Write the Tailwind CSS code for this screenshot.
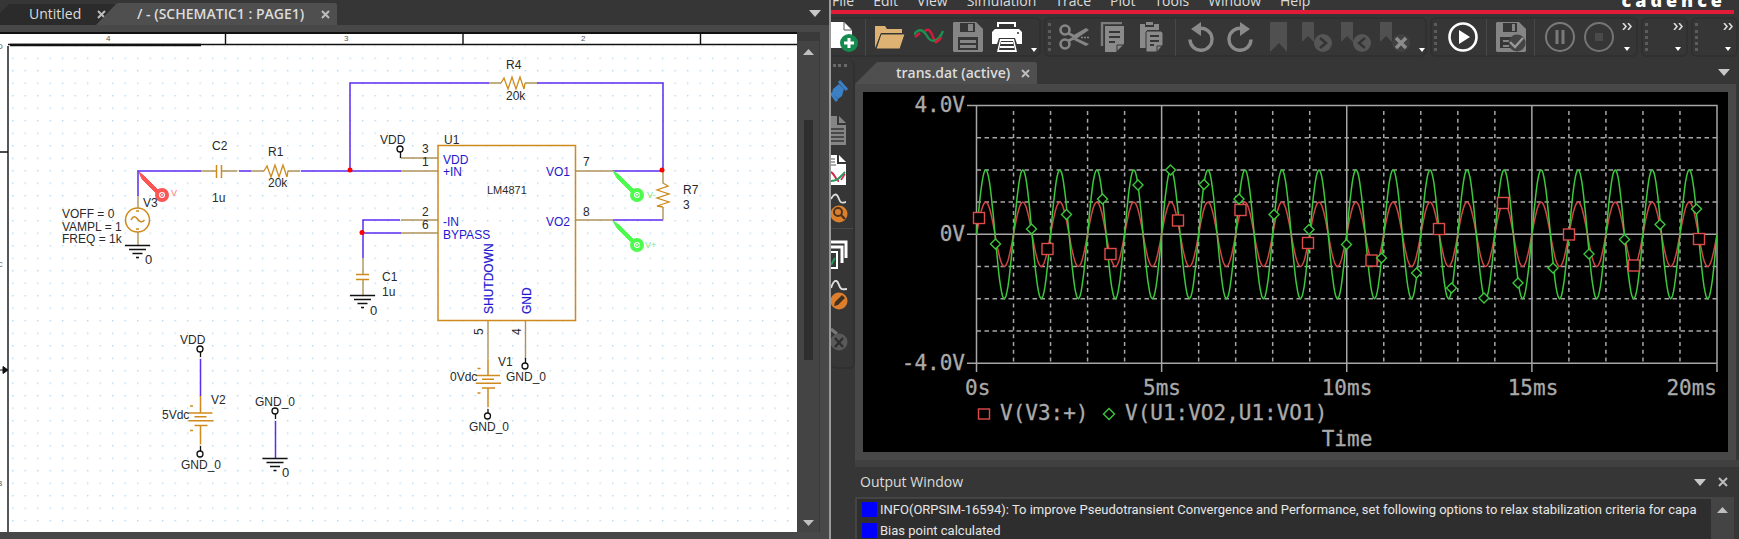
<!DOCTYPE html>
<html lang="en">
<head>
    <meta charset="UTF-8">
    <meta name="viewport" content="width=device-width, initial-scale=1.0">
    <title>Schematic and Simulation</title>
    <script src="https://cdn.jsdelivr.net/npm/@tailwindcss/browser@4"></script>
</head>
<body class="h-screen overflow-hidden bg-[#363636] font-['Open_Sans','Noto_Sans',sans-serif] text-sm text-[#dcdcdc]">

<div class="grid h-full grid-cols-[831fr_908fr]">

    <!-- Schematic editor -->
    <section class="flex min-w-0 flex-col border-r-2 border-[#9a9a9a] bg-[#484848]">

        <!-- Tabs -->
        <div class="flex h-[25px] shrink-0 items-end bg-[#363636]">
            <div class="relative flex h-[22px] w-[118px] items-center">
                <svg class="absolute inset-0" width="118" height="22"><path d="M0 10 L9 1 H118 V22 H0z" fill="#2b2b2b"/></svg>
                <button class="relative ml-[29px]">Untitled</button>
                <button class="relative ml-4" aria-label="Close Untitled"><svg width="9" height="9" stroke="#bdbdbd" stroke-width="2"><path d="M1 1l7 7M8 1l-7 7"/></svg></button>
            </div>
            <div class="relative -ml-[22px] flex h-[22px] w-[241px] items-center">
                <svg class="absolute inset-0" width="241" height="22"><path d="M0 22 L20 1 Q21 0 23 0 H239 Q241 0 241 2 V22z" fill="#4f4f4f"/></svg>
                <button class="relative ml-[41px] font-semibold whitespace-nowrap">/ - (SCHEMATIC1 : PAGE1)</button>
                <button class="relative ml-auto mr-[7px]" aria-label="Close page"><svg width="9" height="9" stroke="#bdbdbd" stroke-width="2"><path d="M1 1l7 7M8 1l-7 7"/></svg></button>
            </div>
            <button class="mr-2 mb-2 ml-auto" aria-label="Tab list"><svg width="12" height="7"><path d="M0 0h12l-6 7z" fill="#c8c8c8"/></svg></button>
        </div>

        <div class="flex min-h-0 flex-1 pt-[7px] pb-[7px]">
            <!-- Sheet -->
            <svg class="min-w-0 flex-1 bg-white font-['Liberation_Sans',Arial,sans-serif] text-[12px]" viewBox="0 32 797 500" preserveAspectRatio="xMinYMin slice" fill="none">
                <defs>
                    <pattern id="dots" width="12.5" height="12.5" patternUnits="userSpaceOnUse" x="12" y="57.5"><rect width="1.4" height="1.4" fill="#b4daf2"/></pattern>
                    <g id="gnd" stroke="#111" stroke-width="1.4"><path d="M-12.5 0h25M-8.5 4h17M-5 8h10M-1.5 12h3"/></g>
                    <path id="res" d="M0 0l3-5 4 11 4-12 4 12 4-12 4 12 1-6" stroke="#cf8a1c" stroke-width="1.3"/>
                    <g id="battery" stroke="#cf8a1c" stroke-width="1.5"><path d="M0-17V0M-12 0h24M-6 3.7h12M-12 7.7h25M-6 12.500h13M0 12.500v19M-10.500-7h3M-10.500 17.500h3"/></g>
                </defs>
                <rect x="9" y="46" width="788" height="486" fill="url(#dots)"/>

                <!-- Frame and zone marks -->
                <g stroke="#111">
                    <path d="M0 33h797" stroke-width="2"/>
                    <path d="M8 44.500h789M225.500 33v11M463 33v11M700.500 33v11M0 152h8M8 46v486" stroke-width="1.4"/>
                    <path d="M10 45h191" stroke-width="2.400"/>
                </g>
                <path d="M0 370h3v-3.500l5 3.500-5 3.500v-3.500" fill="#111" stroke="#111"/>
                <g fill="#555" class="text-[8px]">
                    <text x="106" y="41">4</text><text x="344" y="41">3</text><text x="581" y="41">2</text>
                    <text x="-3" y="49">D</text><text x="-3" y="267">C</text><text x="-3" y="486">B</text>
                </g>

                <!-- Wires -->
                <g stroke="#5b2df0" stroke-width="1.500">
                    <path d="M138 196V171h63M239 171h12M301 171h100M350 171V83h139M537 83h126v88M613 171h50M613 220h50"/>
                    <path d="M400 220h-37v38M363 233h38M200.500 359v37M275.500 421v37"/>
                </g>

                <!-- Pins and leads -->
                <g stroke="#b0935a" stroke-width="1.400">
                    <path d="M201 171h15M222 171h15M251 171h13M288 171h12M401 171h37M401 158h37M489 83h12M525 83h12M401 220h37M401 233h37"/>
                    <path d="M575 171h38M575 220h38M663 171v12M663 207v13M138 196v12M138 232v13M363 258v16M363 280v15M488 321v37M525.500 321v37"/>
                </g>

                <!-- Parts -->
                <g stroke="#cf8a1c" stroke-width="1.500">
                    <rect x="438" y="145.500" width="137.500" height="175"/>
                    <path d="M216.500 165v13M221.500 165v13M356 274.500h13M356 279.500h13"/>
                    <circle cx="137.500" cy="220" r="12"/>
                    <path d="M131 220q3-6 6.500-1t7 1M136 211h3M136 229h3"/>
                </g>
                <use href="#res" x="264" y="171"/>
                <use href="#res" x="501" y="83"/>
                <use href="#res" transform="translate(663 183) rotate(90)"/>
                <use href="#battery" x="200.500" y="413"/>
                <use href="#battery" x="488" y="375.500"/>
                <use href="#gnd" x="137.500" y="245.500"/>
                <use href="#gnd" x="362.500" y="295.500"/>
                <use href="#gnd" x="275" y="458.500"/>
                <g stroke="#111" stroke-width="1.300">
                    <circle cx="400" cy="149" r="3"/><circle cx="200" cy="349" r="3"/><circle cx="200" cy="454" r="3"/>
                    <circle cx="275" cy="411" r="3"/><circle cx="487.500" cy="416" r="3"/><circle cx="525" cy="366" r="3"/>
                    <path d="M400.500 152v6M200.500 352v5M200.500 446v5M275.500 414v5M488 409v4M525.500 358v5"/>
                </g>
                <g fill="#f00"><circle cx="350" cy="170" r="2.500"/><circle cx="662" cy="170" r="2.500"/><circle cx="362" cy="232.500" r="2.500"/></g>

                <!-- Probes -->
                <g stroke="#fb5555"><path d="M139 172l5 4 15 15-3 2-14-14z" fill="#fb5555"/><circle cx="162" cy="195" r="5" stroke-width="4"/><circle cx="162" cy="195" r="1.500"/></g>
                <g stroke="#4dfb4d">
                    <path d="M613 171l6 4 15 15-3 2-14-14zM613 221l6 4 15 15-3 2-14-14z" fill="#4dfb4d"/>
                    <circle cx="637" cy="195" r="5" stroke-width="4"/><circle cx="637" cy="195" r="1.500"/>
                    <circle cx="637" cy="245" r="5" stroke-width="4"/><circle cx="637" cy="245" r="1.500"/>
                </g>
                <text x="171" y="196" fill="#fb7777" class="text-[9px]">V</text>
                <g fill="#7ce87c" class="text-[9px]"><text x="647" y="198">V-</text><text x="645" y="248">V+</text></g>

                <!-- Part names and values -->
                <g fill="#2a2a2a">
                    <text x="212" y="150">C2</text><text x="212" y="202">1u</text>
                    <text x="268" y="156">R1</text><text x="268" y="187">20k</text>
                    <text x="506" y="69">R4</text><text x="506" y="100">20k</text>
                    <text x="683" y="194">R7</text><text x="683" y="209">3</text>
                    <text x="143" y="207">V3</text>
                    <text x="62" y="218">VOFF = 0</text><text x="62" y="231">VAMPL = 1</text><text x="62" y="243">FREQ = 1k</text>
                    <text x="380" y="144">VDD</text><text x="444" y="144">U1</text>
                    <text x="487" y="194" class="text-[11px]">LM4871</text>
                    <text x="382" y="281">C1</text><text x="382" y="296">1u</text>
                    <text x="180" y="344">VDD</text><text x="211" y="404">V2</text><text x="162" y="419">5Vdc</text>
                    <text x="181" y="469">GND_0</text><text x="255" y="406">GND_0</text>
                    <text x="498" y="366">V1</text><text x="450" y="381">0Vdc</text>
                    <text x="506" y="381">GND_0</text><text x="469" y="431">GND_0</text>
                    <text x="422" y="153">3</text><text x="422" y="166">1</text><text x="422" y="216">2</text><text x="422" y="229">6</text>
                    <text x="583" y="166">7</text><text x="583" y="216">8</text>
                    <text transform="translate(483 335) rotate(-90)">5</text><text transform="translate(521 335) rotate(-90)">4</text>
                    <g class="text-[13px]"><text x="145" y="264">0</text><text x="370" y="315">0</text><text x="282" y="477">0</text></g>
                </g>
                <g fill="#2416cf">
                    <text x="443" y="164">VDD</text><text x="443" y="176">+IN</text><text x="443" y="226">-IN</text><text x="443" y="239">BYPASS</text>
                    <text x="546" y="176">VO1</text><text x="546" y="226">VO2</text>
                    <g stroke="#2416cf" stroke-width="0.2"><text transform="translate(493 314) rotate(-90)">SHUTDOWN</text><text transform="translate(531 314) rotate(-90)">GND</text></g>
                </g>
            </svg>

            <!-- Scrollbar -->
            <div class="flex w-[23px] shrink-0 flex-col items-center border-r border-[#3a3a3a] bg-[#444]">
                <div class="h-[9px] w-full bg-[#3a3a3a]"></div>
                <button class="mt-2" aria-label="Scroll up"><svg class="block" width="11" height="6"><path d="M0 6h11l-5.500-6z" fill="#c0c0c0"/></svg></button>
                <div class="flex w-[9px] flex-1 flex-col py-[10px]">
                    <div class="h-[55px] shrink-0"></div>
                    <div class="h-[54%] bg-[#2e2e2e]"></div>
                </div>
                <button class="mb-[6px]" aria-label="Scroll down"><svg class="block" width="11" height="6"><path d="M0 0h11l-5.500 6z" fill="#c0c0c0"/></svg></button>
            </div>
            <div class="w-[9px] shrink-0"></div>
        </div>
    </section>

    <!-- Simulation window -->
    <section class="flex min-w-0 flex-col overflow-hidden bg-[#363636]">

        <!-- Menu -->
        <header class="mr-[5px] flex h-[14px] shrink-0 items-end border-b-4 border-[#e31b37]">
            <nav class="flex gap-[19px] pl-[1px] leading-[18px]">
                <a href="#">File</a><a href="#">Edit</a><a href="#">View</a><a href="#">Simulation</a><a href="#">Trace</a><a href="#">Plot</a><a href="#">Tools</a><a href="#">Window</a><a href="#">Help</a>
            </nav>
            <div class="mr-[12px] ml-auto flex gap-1 text-lg leading-[20px] font-extrabold text-white" aria-label="cadence">
                <span>c</span><span>a</span><span>d</span><span>e</span><span>n</span><span>c</span><span>e</span>
            </div>
        </header>

        <!-- Toolbar -->
        <div class="flex h-[44px] shrink-0 gap-[3px] pt-[3px] pb-px">
            <div class="-ml-[9px] flex h-full items-center rounded-md border-2 border-[#303030] pr-[2px]">
                <button class="flex w-[37px] justify-center pl-[1px]" aria-label="New"><svg width="30" height="30"><path d="M2 0h14l8 8v18H2z" fill="#fff"/><path d="M16 0v8h8" fill="none" stroke="#555"/><circle cx="21" cy="21" r="9" fill="#168a4e"/><path d="M21 16v10M16 21h10" stroke="#fff" stroke-width="3"/></svg></button>
                <i class="mx-1 h-[37px] w-px bg-[#484848]"></i>
                <button class="flex w-[39px] justify-center" aria-label="Open"><svg width="30" height="30" fill="#deb272"><path d="M0 26V4h10l2 3h15v4H6z"/><path d="M6 12h24l-5 15H1z" stroke="#363636"/></svg></button>
                <button class="flex w-[39px] justify-center" aria-label="Waveform"><svg width="30" height="30" fill="none" stroke-width="2.400"><path d="M10 10c4-5 7-1 9 5s5 6 8 0" stroke="#d01c3a"/><path d="M0 13C4 6 9 7 13 14s11 7 16-5" stroke="#1a9150"/><path d="M1 15l5-4M21 21l6-5" stroke="#d01c3a"/></svg></button>
                <button class="flex w-[39px] justify-center" aria-label="Save"><svg width="30" height="30"><path d="M1 0h22l7 7v22l-1 1H1l-1-1V1z" fill="#858585"/><path d="M7 1h15v9H7zM5 15h20v13H5z" fill="#363636"/><path d="M15 2h5v7h-5zM7 18h16v3H7zM7 23h16v3H7z" fill="#858585"/></svg></button>
                <button class="flex w-[39px] justify-center" aria-label="Print"><svg width="30" height="30"><path d="M5 0h19v5h-2V2H7v3H5zM3 7h24l3 3v12h-5l-2-6H7l-2 6H0V10z" fill="#fff"/><path d="M8 17h14l3 13H5z" fill="#fff"/><path d="M9 19h12l2 9H7z" fill="#363636"/><path d="M9 21h12M8 25h14" stroke="#fff" stroke-width="2"/><circle cx="26" cy="11" r="1" fill="#333"/></svg></button>
                <button class="mt-[26px] flex w-[11px] justify-end" aria-label="More print options"><svg width="6" height="4"><path d="M0 0h6l-3 4z" fill="#fff"/></svg></button>
            </div>
            <div class="flex h-full items-center rounded-md border-2 border-[#303030]">
                <i class="mr-[3px] ml-[2px] h-[28px] w-0 border-l-3 border-dotted border-[#5c5c5c]"></i>
                <button class="flex w-[39px] justify-center" aria-label="Cut"><svg width="30" height="30" fill="none" stroke="#868686" stroke-width="2.600"><circle cx="6" cy="8" r="4.500"/><circle cx="6" cy="22" r="4.500"/><path d="M9 11l9 5M9 19l6-3"/><path d="M13 14L27 6l3 2-13 9zM17 16l13 6-3 2-14-7z" fill="#868686" stroke="none"/><path d="M22 15.500h8" stroke-width="1.500" stroke-dasharray="2 1"/></svg></button>
                <button class="flex w-[39px] justify-center" aria-label="Copy"><svg width="30" height="30"><path d="M4 24V1h20" fill="none" stroke="#7c7c7c" stroke-width="2.400"/><path d="M7 4h19v18l-8 8H7z" fill="#8a8a8a"/><path d="M11 10h11M11 15h11M11 20h6" stroke="#363636" stroke-width="2"/><path d="M19 30v-7h7" fill="none" stroke="#363636"/></svg></button>
                <button class="flex w-[39px] justify-center" aria-label="Paste"><svg width="30" height="30"><path d="M3 2h5v3h9V2h5v6H10v18H3z" fill="#8a8a8a"/><path d="M9 0h7v3H9z" fill="#8a8a8a"/><path d="M10 9h14l2 2v12l-6 7H9V10z" fill="#8a8a8a" stroke="#363636"/><path d="M13 14h9M13 19h9M13 23h4" stroke="#363636" stroke-width="2"/><path d="M20 30v-6h6" fill="none" stroke="#363636"/></svg></button>
                <i class="mx-1 h-[37px] w-px bg-[#484848]"></i>
                <button class="flex w-[39px] justify-center" aria-label="Undo"><svg width="30" height="30"><path d="M14 6.500a11 11 0 1 1-9 11" fill="none" stroke="#8a8a8a" stroke-width="3.400"/><path d="M6 7L16 0v14z" fill="#8a8a8a"/></svg></button>
                <button class="flex w-[39px] justify-center" aria-label="Redo"><svg width="30" height="30"><path d="M18 6.500a11 11 0 1 0 9 11" fill="none" stroke="#8a8a8a" stroke-width="3.400"/><path d="M26 7L16 0v14z" fill="#8a8a8a"/></svg></button>
                <button class="flex w-[39px] justify-center" aria-label="Bookmark"><svg width="30" height="30"><path d="M7 0h17v30l-8-9-9 9z" fill="#505050"/></svg></button>
                <button class="flex w-[39px] justify-center" aria-label="Next bookmark"><svg width="30" height="30"><path d="M0 0h12v20l-6-6-6 6z" fill="#505050"/><circle cx="21" cy="21" r="9" fill="#565656"/><path d="M18 16l6 5-6 5" fill="none" stroke="#333" stroke-width="2.400"/></svg></button>
                <button class="flex w-[39px] justify-center" aria-label="Previous bookmark"><svg width="30" height="30"><path d="M0 0h12v20l-6-6-6 6z" fill="#505050"/><circle cx="21" cy="21" r="9" fill="#565656"/><path d="M24 16l-6 5 6 5" fill="none" stroke="#333" stroke-width="2.400"/></svg></button>
                <button class="flex w-[39px] justify-center" aria-label="Clear bookmarks"><svg width="30" height="30"><path d="M0 0h12v20l-6-6-6 6z" fill="#505050"/><circle cx="21" cy="21" r="9" fill="#414141"/><path d="M16 16l10 10M26 16L16 26" stroke="#8c8c8c" stroke-width="3.400"/></svg></button>
                <button class="mt-[26px] flex w-[11px] justify-end" aria-label="More bookmark options"><svg width="6" height="4"><path d="M0 0h6l-3 4z" fill="#fff"/></svg></button>
            </div>
            <div class="flex h-full items-center rounded-md border-2 border-[#303030]">
                <i class="mr-[6px] ml-[2px] h-[28px] w-0 border-l-3 border-dotted border-[#5c5c5c]"></i>
                <button class="flex w-[39px] justify-center" aria-label="Run"><svg width="30" height="30"><circle cx="15" cy="15" r="13.500" fill="none" stroke="#fff" stroke-width="2.600"/><path d="M11 8l11 7-11 7z" fill="#fff"/></svg></button>
                <i class="mx-1 h-[37px] w-px bg-[#484848]"></i>
                <button class="flex w-[39px] justify-center" aria-label="Save check point"><svg width="30" height="30"><path d="M1 0h22l7 7v22l-1 1H1l-1-1V1z" fill="#858585"/><path d="M7 1h14v9H7zM4 15h18v11H4z" fill="#363636"/><path d="M16 2h3v7h-3zM7 18h6v2H7zM7 23h6v2H7z" fill="#858585"/><circle cx="21" cy="21" r="8.500" fill="#444"/><path d="M14 20l5 5 8-9" fill="none" stroke="#999" stroke-width="2.400"/></svg></button>
                <i class="mr-[5px] ml-1 h-[37px] w-px bg-[#484848]"></i>
                <button class="flex w-[39px] justify-center" aria-label="Pause"><svg width="30" height="30" fill="none" stroke="#7a7a7a"><circle cx="15" cy="15" r="14" stroke-width="2"/><path d="M12 8v14M18 8v14" stroke-width="3"/></svg></button>
                <button class="flex w-[39px] justify-center" aria-label="Stop"><svg width="30" height="30"><circle cx="15" cy="15" r="14" fill="none" stroke="#747474" stroke-width="2"/><path d="M11 11h8v8h-8z" fill="#4a4a4a"/></svg></button>
                <button class="flex h-full w-[18px] flex-col items-center justify-between pt-[4px] pb-[4px]" aria-label="More run tools"><svg width="10" height="7" fill="none" stroke="#ddd" stroke-width="1.600"><path d="M1 0l3 3.500-3 3.500M6 0l3 3.500-3 3.500"/></svg><svg width="6" height="4"><path d="M0 0h6l-3 4z" fill="#fff"/></svg></button>
            </div>
            <div class="flex h-full w-[47px] items-center justify-between rounded-md border-2 border-[#303030]">
                <i class="ml-[2px] h-[28px] w-0 border-l-3 border-dotted border-[#5c5c5c]"></i>
                <button class="flex h-full w-4 flex-col items-center justify-between pt-[4px] pb-[4px]" aria-label="More tools"><svg width="10" height="7" fill="none" stroke="#ddd" stroke-width="1.600"><path d="M1 0l3 3.500-3 3.500M6 0l3 3.500-3 3.500"/></svg><svg width="6" height="4"><path d="M0 0h6l-3 4z" fill="#fff"/></svg></button>
            </div>
            <div class="flex h-full w-[47px] items-center justify-between rounded-md border-2 border-[#303030]">
                <i class="ml-[2px] h-[28px] w-0 border-l-3 border-dotted border-[#5c5c5c]"></i>
                <button class="flex h-full w-4 flex-col items-center justify-between pt-[4px] pb-[4px]" aria-label="More cursor tools"><svg width="10" height="7" fill="none" stroke="#ddd" stroke-width="1.600"><path d="M1 0l3 3.500-3 3.500M6 0l3 3.500-3 3.500"/></svg><svg width="6" height="4"><path d="M0 0h6l-3 4z" fill="#fff"/></svg></button>
            </div>
        </div>

        <div class="flex min-h-0 flex-1">
            <!-- Side toolbar -->
            <aside class="flex w-[24px] shrink-0 flex-col pt-[2px]">
                <div class="flex h-[309px] flex-col items-start overflow-hidden rounded-md border-r-2 border-b-2 border-[#303030]">
                    <i class="mt-[4px] ml-[2px] h-0 w-[14px] border-t-3 border-dotted border-[#6a6a6a]"></i>
                    <button class="mt-[7px] h-[37px]" aria-label="Pin"><svg width="17" height="26"><path d="M8 4l5 5-2 7-4 3-6-6 1-4z" fill="#3b7fc4"/><path d="M8 1l8 9M0 13l6 8" stroke="#3b7fc4" stroke-width="3"/></svg></button>
                    <button class="h-[39px]" aria-label="Text"><svg width="16" height="31"><path d="M0 1h6v9h9v20H0z" fill="#858585"/><path d="M8 1l7 7H8z" fill="#858585"/><path d="M0 14h13M0 18h13M0 22h13M0 26h13" stroke="#363636" stroke-width="1.400"/></svg></button>
                    <button class="h-[39px]" aria-label="Probe"><svg width="16" height="31" fill="none"><path d="M0 1h6v9h9v21H0zM8 1l7 7H8z" fill="#fff"/><path d="M0 5h4M0 8h4M0 11h5" stroke="#555"/><path d="M0 18c4 2 5 9 8 9" stroke="#d42a48" stroke-width="2"/><path d="M0 27c5 0 8-2 14-9" stroke="#2b9d60" stroke-width="2"/><path d="M10 26l4-6" stroke="#d42a48" stroke-width="1.500"/></svg></button>
                    <button class="h-[39px]" aria-label="Search trace"><svg width="17" height="31" fill="none"><path d="M0 6c3-6 6-6 8 0s5 3 7 3" stroke="#ddd" stroke-width="1.800"/><circle cx="8" cy="21" r="8.500" fill="#dc7f2c"/><circle cx="7" cy="19" r="4" stroke="#4a3420" stroke-width="2"/><path d="M10 22l4 4" stroke="#4a3420" stroke-width="2.400"/></svg></button>
                    <i class="mb-[7px] h-px w-full bg-[#4a4a4a]"></i>
                    <button class="h-[39px]" aria-label="Windows"><svg width="17" height="31" fill="none" stroke="#fff" stroke-width="3"><path d="M0 2h15v16M0 7h11v16"/><path d="M0 12h6v16H0" fill="#363636" stroke-width="2"/><path d="M0 25l4-7" stroke="#27965a" stroke-width="2"/></svg></button>
                    <button class="h-[40px]" aria-label="Edit trace"><svg width="17" height="31" fill="none"><path d="M0 8c3-9 6-9 8-3s4 4 8 4" stroke="#ddd" stroke-width="2"/><circle cx="8" cy="21" r="8.500" fill="#dc7f2c"/><path d="M3 26l1-4 7-7 3 3-7 7z" fill="#42301f"/></svg></button>
                    <button class="pt-3" aria-label="Settings"><svg width="17" height="26" fill="none"><path d="M0 2l6 5" stroke="#777" stroke-width="3"/><circle cx="8" cy="15" r="8.500" fill="#595959"/><path d="M4 11l8 9M12 11l-8 9" stroke="#2e2e2e" stroke-width="2.400"/></svg></button>
                </div>
            </aside>

            <main class="flex min-w-0 flex-1 flex-col">
                <!-- Plot tabs -->
                <div class="flex h-[26px] shrink-0 items-end">
                    <div class="relative flex h-[22px] w-[182px] items-center">
                        <svg class="absolute inset-0" width="182" height="22"><path d="M0 22 L21 1 Q22 0 24 0 H180 Q182 0 182 2 V22z" fill="#4f4f4f"/></svg>
                        <button class="relative ml-[41px] font-semibold whitespace-nowrap">trans.dat (active)</button>
                        <button class="relative mr-[7px] ml-auto" aria-label="Close plot"><svg width="9" height="9" stroke="#bdbdbd" stroke-width="2"><path d="M1 1l7 7M8 1l-7 7"/></svg></button>
                    </div>
                    <button class="mr-[9px] mb-2 ml-auto" aria-label="Plot list"><svg width="12" height="7"><path d="M0 0h12l-6 7z" fill="#c8c8c8"/></svg></button>
                </div>

                <!-- Plot -->
                <div class="mr-[3px] min-h-0 flex-1 border-8 border-[#484848] bg-black">
                    <svg class="block h-full w-full font-['DejaVu_Sans_Mono',monospace] text-[21px]" viewBox="863 92 865 360" fill="none">
                        <g id="grid" stroke="#a6a6a6" stroke-width="1.500"></g>
                        <path id="trace-in" stroke="#d24545" stroke-width="1.500"/>
                        <path id="trace-out" stroke="#3cc83c" stroke-width="1.500"/>
                        <g id="marks"></g>
                        <g fill="#aaa" stroke="#aaa" stroke-width="0.300">
                            <text x="965" y="112" text-anchor="end">4.0V</text>
                            <text x="965" y="241" text-anchor="end">0V</text>
                            <text x="965" y="370" text-anchor="end">-4.0V</text>
                            <text x="965" y="395">0s</text>
                            <text x="1162" y="395" text-anchor="middle">5ms</text>
                            <text x="1347" y="395" text-anchor="middle">10ms</text>
                            <text x="1533" y="395" text-anchor="middle">15ms</text>
                            <text x="1717" y="395" text-anchor="end">20ms</text>
                            <text x="1000" y="420">V(V3:+)</text>
                            <text x="1125" y="420">V(U1:VO2,U1:VO1)</text>
                            <text x="1347" y="446" text-anchor="middle">Time</text>
                        </g>
                        <rect x="978.500" y="409" width="11" height="10" stroke="#e04a4a" stroke-width="1.400"/>
                        <path d="M1109 408.500l5.500 5.500-5.500 5.500-5.500-5.500z" stroke="#3cc83c" stroke-width="1.400"/>
                    </svg>
                </div>

                <!-- Output window -->
                <div class="h-[7px] shrink-0 bg-[#404040]"></div>
                <div class="flex h-[30px] shrink-0 items-center pr-[11px] pl-[5px]">
                    <h2>Output Window</h2>
                    <button class="ml-auto" aria-label="Output menu"><svg width="12" height="7"><path d="M0 0h12l-6 7z" fill="#c8c8c8"/></svg></button>
                    <button class="ml-3" aria-label="Close output"><svg width="10" height="10" stroke="#bdbdbd" stroke-width="2"><path d="M1 1l8 8M9 1l-8 8"/></svg></button>
                </div>
                <div class="mr-[5px] flex h-[42px] shrink-0 overflow-hidden border-t-2 border-l-2 border-[#444] bg-[#2e2e2e] font-[Roboto,sans-serif] text-[13px] text-[#e6e6e6]">
                    <ul class="min-w-0 flex-1 overflow-hidden pl-[5px] leading-[21px] whitespace-nowrap">
                        <li class="flex items-center gap-[3px]"><i class="h-[15px] w-[15px] shrink-0 bg-[#0000fe]"></i>INFO(ORPSIM-16594): To improve Pseudotransient Convergence and Performance, set following options to relax stabilization criteria for capa</li>
                        <li class="flex items-center gap-[3px]"><i class="h-[15px] w-[15px] shrink-0 bg-[#0000fe]"></i>Bias point calculated</li>
                    </ul>
                    <div class="flex w-[23px] shrink-0 justify-center bg-[#444] pt-2">
                        <button class="h-[6px]" aria-label="Scroll output up"><svg class="block" width="11" height="6"><path d="M0 6h11l-5.500-6z" fill="#c0c0c0"/></svg></button>
                    </div>
                </div>
            </main>
        </div>
    </section>
</div>

<script>
    const X0 = 976.5, X1 = 1717, Y0 = 234.3, PER_MS = (X1 - X0) / 20, PER_V = 32.2;

    // Grid
    let grid = '';
    for (let ms = 1; ms < 20; ms++) {
        const x = X0 + ms * PER_MS;
        grid += ms % 5 === 0
            ? `<path d="M${x} 106V372"/>`
            : `<path d="M${x} 111V363" stroke-dasharray="4 3.700"/>`;
    }
    for (const v of [-3, -2, -1, 1, 2, 3]) {
        grid += `<path d="M${X0} ${Y0 - v * PER_V}H${X1}" stroke-dasharray="4.500 3.500"/>`;
    }
    grid += `<path d="M967 105.500H${X1}V372M967 ${Y0}H${X1}M967 363.200H${X1}M${X0} 105.500V372"/>`;
    document.getElementById('grid').innerHTML = grid;

    // Traces, 1 kHz sine over 20 ms
    function sine(amp) {
        let d = '';
        for (let i = 0; i <= 800; i++) {
            const t = i / 40;
            d += (i ? 'L' : 'M') + (X0 + t * PER_MS).toFixed(1) + ' ' + (Y0 - amp * PER_V * Math.sin(2 * Math.PI * t)).toFixed(1);
        }
        return d;
    }
    document.getElementById('trace-in').setAttribute('d', sine(1));
    document.getElementById('trace-out').setAttribute('d', sine(2));

    // Trace markers
    const squares = [[979,218],[1047.5,249],[1110.5,254],[1178,220.5],[1240.5,210],[1308,243],[1371.5,260.5],[1439,229],[1503,203],[1569,234.5],[1634,265.5],[1699,239]];
    const diamonds = [[995.5,244],[1031.5,229],[1066.5,214.5],[1102.5,199],[1138,185],[1170.5,170],[1204,184.5],[1239,199],[1274,214.5],[1309,229.5],[1346.5,244.5],[1381.5,258],[1416.5,273],[1451.5,288],[1484,298],[1518,283],[1553,268],[1589,254],[1624.5,239.5],[1660,224.5],[1696.5,209]];
    document.getElementById('marks').innerHTML =
        squares.map(([x, y]) => `<rect x="${x - 5.5}" y="${y - 5.5}" width="11" height="11" fill="#000" stroke="#e04a4a" stroke-width="1.400"/>`).join('') +
        diamonds.map(([x, y]) => `<path d="M${x} ${y - 5}l5 5-5 5-5-5z" fill="#000" stroke="#3cc83c" stroke-width="1.400"/>`).join('');
</script>

</body>
</html>
